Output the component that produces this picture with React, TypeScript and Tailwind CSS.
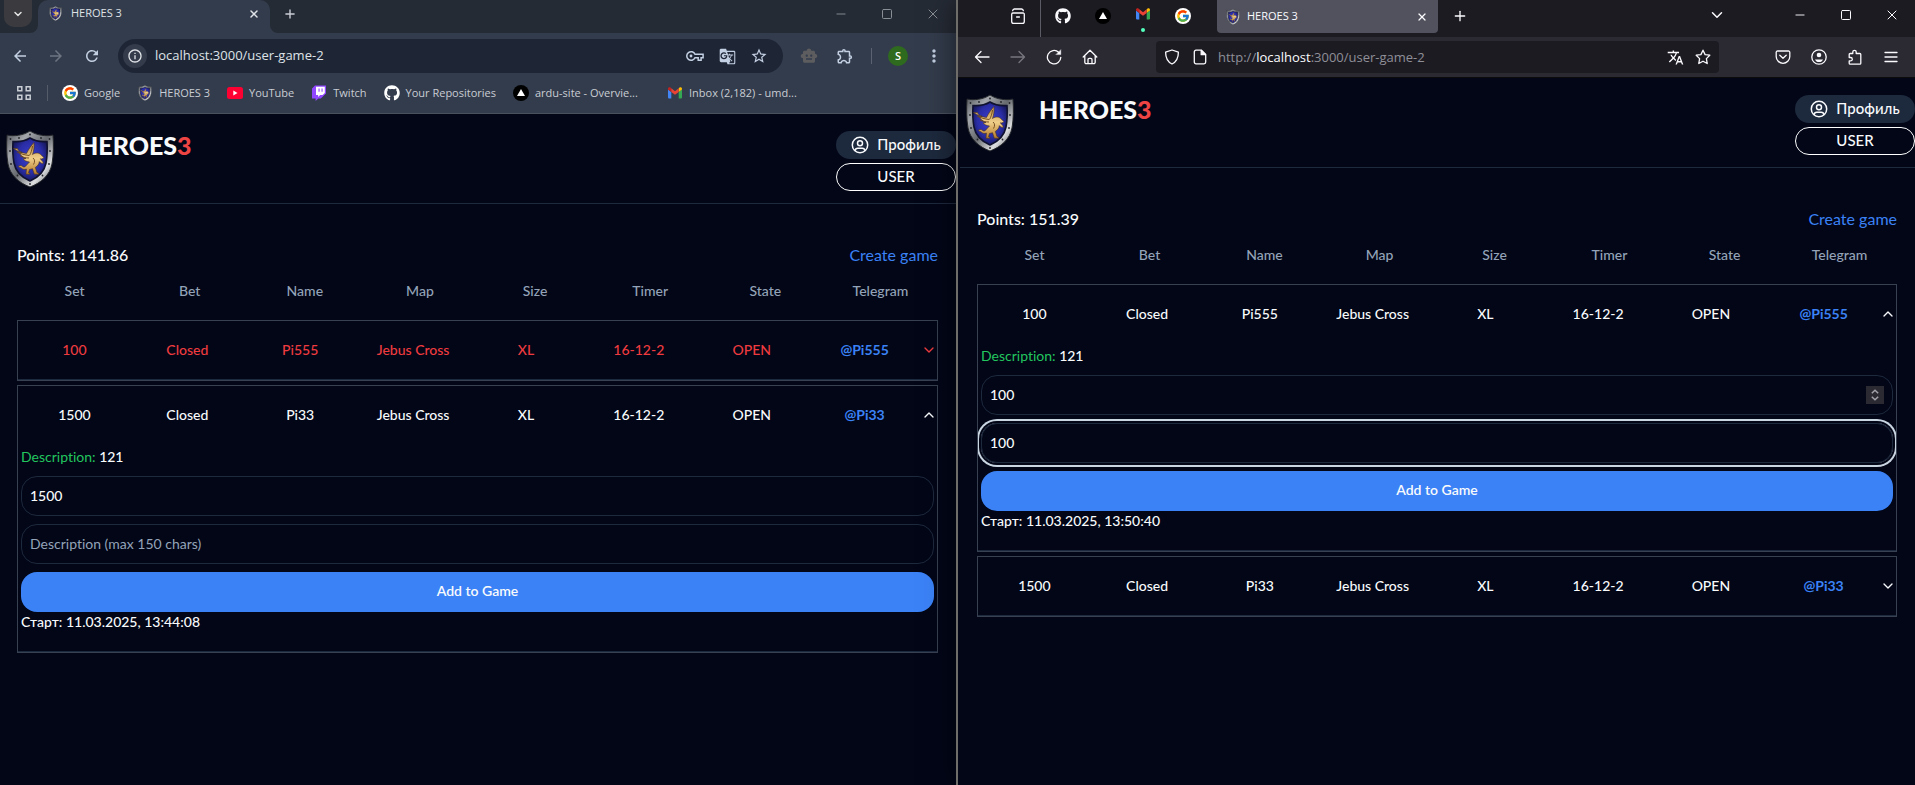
import React, { useId, useState } from "react";
import { FcGoogle } from "react-icons/fc";
import { FaGithub } from "react-icons/fa";
import {
  MdArrowBack,
  MdArrowForward,
  MdGTranslate,
  MdInfoOutline,
  MdMoreVert,
  MdOutlineExtension,
  MdRefresh,
  MdSmartToy,
  MdStarBorder,
  MdTranslate,
} from "react-icons/md";
import { ChevronDown, Minus, Plus, Square, X } from "lucide-react";

/* ---------- drawings ---------- */

function Crest({ className }: { className: string }) {
  const id = useId();
  return (
    <svg viewBox="0 0 48 58" className={className} aria-hidden="true">
      <defs>
        <linearGradient id={id + "m"} x1="0" y1="0" x2="1" y2="1">
          <stop offset="0" stopColor="#4c4f53" />
          <stop offset=".25" stopColor="#a3a6aa" />
          <stop offset=".5" stopColor="#66696d" />
          <stop offset=".75" stopColor="#dcdee0" />
          <stop offset="1" stopColor="#3f4145" />
        </linearGradient>
        <radialGradient id={id + "b"} cx=".5" cy=".45" r=".6">
          <stop offset="0" stopColor="#3a3fd0" />
          <stop offset=".6" stopColor="#2a2da6" />
          <stop offset="1" stopColor="#12144e" />
        </radialGradient>
        <linearGradient id={id + "g"} x1="0" y1="0" x2="0" y2="1">
          <stop offset="0" stopColor="#b98a45" />
          <stop offset=".5" stopColor="#f0cf8a" />
          <stop offset="1" stopColor="#b47a2c" />
        </linearGradient>
      </defs>
      <path
        d="M1 5C8 6.500 17 5.500 24 1c7 4.500 16 5.500 23 4 .6 9 .6 20-1 29-2 11-11 19-22 23C13 53 4 45 2 34 .4 25 .4 14 1 5Z"
        fill={"url(#" + id + "m)"}
        stroke="#25272b"
        strokeWidth="1"
      />
      <path
        d="M7 11.500c6 .5 12-.5 17-3.500 5 3 11 4 17 3.500.5 8 .2 15-1 21.500C38.500 41 32 47.500 24 51 16 47.500 9.500 41 8 33 6.800 26.500 6.500 19.500 7 11.500Z"
        fill={"url(#" + id + "b)"}
        stroke="#101230"
        strokeWidth="1.600"
      />
      <g fill="#232528">
        <circle cx="4.500" cy="9" r=".9" />
        <circle cx="13" cy="8" r=".9" />
        <circle cx="24" cy="4.500" r=".9" />
        <circle cx="35" cy="8" r=".9" />
        <circle cx="43.500" cy="9" r=".9" />
        <circle cx="4" cy="21" r=".9" />
        <circle cx="44" cy="21" r=".9" />
        <circle cx="5" cy="34" r=".9" />
        <circle cx="43" cy="34" r=".9" />
        <circle cx="11.500" cy="45.500" r=".9" />
        <circle cx="36.500" cy="45.500" r=".9" />
        <circle cx="24" cy="54" r=".9" />
      </g>
      <path
        d="M7.500 18.500c4 3 9 4.500 13 5 2-4 4.500-8 7.500-11 .5 5-.3 8.500-1.500 12 2-1.500 5.500-2.200 8-.2 1.500 1.200 2 2.500 3.300 3.200-.8 1.500-2.300 1.600-3.500 1.300.8 1.500 3 2.200 3 4.400-1.600.6-3-.3-4-1.600-.2 3-2 4.500-4 5.800l1.600 5c1 .2 1.800.8 2 1.800h-4.600l-1.800-5.500-3 .8-1 3.200c1 .2 1.500.8 1.700 1.500h-4.200l.4-5.200c-1.600.8-3.500.6-4.600-.6-1.200-1.400-3-.5-3.300-2.400 1.800-1 3.300-.6 4.500.8 1.400.8 2.600-.4 3.500-1.600l3-3.200c-2.800-.2-5-1.400-6.500-3.200 1.200.2 2 .1 3-.3-3.400-1.300-6-3.800-7.200-6.400 1.200.4 2.300.5 3.400.3-3.300-1-4.200-2.400-4.700-3.900Z"
        fill={"url(#" + id + "g)"}
        stroke="#4c3216"
        strokeWidth=".6"
      />
      <path
        d="M11 22c4 2 8 3 12 3.500M14 26c3 1.500 6 2 9 2M26.500 16c-.5 4-1.500 7-3 9.500M27 28c2 1.500 2 4 .5 6.500"
        stroke="#6b4519"
        strokeWidth=".9"
        fill="none"
      />
    </svg>
  );
}

const YouTubeMark = () => (
  <svg viewBox="0 0 16 12" className="h-3 w-4 shrink-0" aria-hidden="true">
    <rect width="16" height="12" rx="2.500" fill="#ff0033" />
    <path d="M6.300 3.600v4.800L10.500 6Z" fill="#fff" />
  </svg>
);

const TwitchMark = () => (
  <svg viewBox="0 0 16 16" className="size-4 shrink-0" aria-hidden="true">
    <path d="M4 .5 1 3.400v10h3.600v2.600l2.800-2.600h2.400L15 8.400V.5Z" fill="#9146ff" />
    <path d="M5 1.700h8.800v6.200l-2.200 2.200H9.200l-2.100 2v-2H5Z" fill="#fff" />
    <path d="M7.500 3.600h1.100v3.200H7.500Zm3 0h1.100v3.200h-1.100Z" fill="#9146ff" />
  </svg>
);

const GmailMark = () => (
  <svg viewBox="0 0 16 12" className="h-3 w-4 shrink-0" aria-hidden="true">
    <path d="M1 2.500 4.300 5v6.500H2a1 1 0 0 1-1-1Z" fill="#4285f4" />
    <path d="M15 2.500 11.700 5v6.500H14a1 1 0 0 0 1-1Z" fill="#34a853" />
    <path d="M11.700 1.600V5L15 2.600v-.8c0-1.500-1.500-2-2.500-1.200Z" fill="#fbbc04" />
    <path d="M4.300 1.600V5L1 2.600v-.8C1 .3 2.500-.2 3.500.6Z" fill="#c5221f" />
    <path d="M4.300 5V1.300L8 4.200l3.700-2.900V5L8 7.800Z" fill="#ea4335" />
  </svg>
);

const TriangleMark = () => (
  <svg viewBox="0 0 16 16" className="size-4 shrink-0" aria-hidden="true">
    <circle cx="8" cy="8" r="8" fill="#000" />
    <path d="M8 4 12 11H4Z" fill="#fff" />
  </svg>
);

const GoogleMark = () => (
  <span className="flex size-4 shrink-0 items-center justify-center rounded-full bg-white">
    <FcGoogle className="size-3.5" />
  </span>
);

const KeyGlyph = () => (
  <svg viewBox="0 0 18 12" className="h-3 w-[18px]" fill="none" stroke="currentColor" strokeWidth="1.500" aria-hidden="true">
    <path d="M9 4.300A4.300 4.300 0 1 0 9 7.700h3.200v2.500h2.900V7.700h2V4.300Z" />
    <circle cx="5" cy="6" r="1.400" fill="currentColor" stroke="none" />
  </svg>
);

const AppsGlyph = () => (
  <svg viewBox="0 0 14 14" className="size-3.5" fill="none" stroke="currentColor" strokeWidth="1.500" aria-hidden="true">
    <path d="M.8.8h4v4h-4ZM9.200.8h4v4h-4ZM.8 9.200h4v4h-4ZM9.200 9.200h4v4h-4Z" />
  </svg>
);

type GlyphProps = { children: React.ReactNode };
const Glyph = ({ children }: GlyphProps) => (
  <svg
    viewBox="0 0 16 16"
    className="size-4"
    fill="none"
    stroke="currentColor"
    strokeWidth="1.300"
    strokeLinecap="round"
    strokeLinejoin="round"
    aria-hidden="true"
  >
    {children}
  </svg>
);

/* ---------- shared pieces ---------- */

function IconButton({ label, className, children }: { label: string; className: string; children: React.ReactNode }) {
  return (
    <button type="button" aria-label={label} className={"flex shrink-0 items-center justify-center " + className}>
      {children}
    </button>
  );
}

function WindowButtons({ className }: { className: string }) {
  return (
    <div className={"flex " + className}>
      <IconButton label="Minimize" className="w-[46px]">
        <Minus className="size-3.5" strokeWidth={1.6} />
      </IconButton>
      <IconButton label="Maximize" className="w-[46px]">
        <Square className="size-3" strokeWidth={2} strokeLinejoin="miter" />
      </IconButton>
      <IconButton label="Close" className="w-[46px]">
        <X className="size-4" strokeWidth={1.5} />
      </IconButton>
    </div>
  );
}

/* ---------- first browser window ---------- */

const bookmarks = [
  { label: "Google", icon: <GoogleMark /> },
  { label: "HEROES 3", icon: <Crest className="size-4 shrink-0" /> },
  { label: "YouTube", icon: <YouTubeMark /> },
  { label: "Twitch", icon: <TwitchMark /> },
  { label: "Your Repositories", icon: <FaGithub className="size-4 shrink-0 text-white" /> },
  { label: "ardu-site - Overvie...", icon: <TriangleMark />, wide: true },
  { label: "Inbox (2,182) - umd...", icon: <GmailMark />, wide: true },
];

function ChromeBar() {
  return (
    <header className="border-b border-[#4a515e] bg-[#333c4c] font-['Open_Sans',sans-serif] text-[#c9cdd4]">
      <div className="flex h-[33px] bg-[#252b35]">
        <IconButton label="Search tabs" className="ml-1 h-[27px] w-7 rounded-b-[10px] bg-[#3b3b3f] text-[#e3e3e3]">
          <ChevronDown className="size-3" strokeWidth={3} />
        </IconButton>
        <svg viewBox="0 0 8 8" className="ml-[-2px] size-2 shrink-0 self-end" aria-hidden="true">
          <path d="M8 0v8H0a8 8 0 0 0 8-8Z" fill="#333c4c" />
        </svg>
        <div className="flex w-[232px] items-center rounded-t-[10px] bg-[#333c4c] px-2.5 pb-1.5 text-[#dfe2e7]">
          <Crest className="size-[15px] shrink-0" />
          <span className="ml-2 flex-1 text-[11px]">HEROES 3</span>
          <IconButton label="Close tab" className="size-3">
            <X className="size-3" strokeWidth={3} />
          </IconButton>
        </div>
        <svg viewBox="0 0 8 8" className="size-2 shrink-0 self-end" aria-hidden="true">
          <path d="M0 0v8h8a8 8 0 0 1-8-8Z" fill="#333c4c" />
        </svg>
        <IconButton label="New tab" className="w-6 pb-1.5">
          <Plus className="size-3.5" strokeWidth={2.4} />
        </IconButton>
        <WindowButtons className="ml-auto pb-1.5 text-[#8a8e95]" />
      </div>

      <div className="flex h-[46px] items-center text-[#c3cfe2]">
        <IconButton label="Back" className="ml-0.5 size-9">
          <MdArrowBack className="size-[18px]" />
        </IconButton>
        <IconButton label="Forward" className="size-9 text-[#6c7481]">
          <MdArrowForward className="size-[18px]" />
        </IconButton>
        <IconButton label="Reload" className="size-9">
          <MdRefresh className="size-[18px]" />
        </IconButton>
        <div className="ml-2 flex h-[34px] flex-1 items-center rounded-full bg-[#1e2636] pr-2">
          <IconButton label="Site information" className="ml-[5px] size-6 rounded-full bg-[#343b4b] text-[#dfe2e7]">
            <MdInfoOutline className="size-4" />
          </IconButton>
          <input
            aria-label="Address"
            defaultValue="localhost:3000/user-game-2"
            className="ml-2 min-w-0 flex-1 bg-transparent text-[13px] text-[#dfe2e7] outline-none"
          />
          <IconButton label="Passwords" className="w-8">
            <KeyGlyph />
          </IconButton>
          <IconButton label="Translate" className="w-8">
            <MdGTranslate className="size-[17px]" />
          </IconButton>
          <IconButton label="Bookmark" className="w-8">
            <MdStarBorder className="size-[18px]" />
          </IconButton>
        </div>
        <IconButton label="Assistant" className="ml-2 w-9 text-[#5d5d5f]">
          <MdSmartToy className="size-[18px]" />
        </IconButton>
        <IconButton label="Extensions" className="w-9">
          <MdOutlineExtension className="size-[18px]" />
        </IconButton>
        <span className="ml-2 h-4 w-px bg-[#5b6372]" />
        <IconButton label="Account S" className="ml-4 size-5 rounded-full bg-[#2f6b1e] text-[11px] font-semibold text-white">
          S
        </IconButton>
        <IconButton label="Menu" className="ml-2 mr-1 w-9">
          <MdMoreVert className="size-5" />
        </IconButton>
      </div>

      <nav aria-label="Bookmarks" className="flex h-[34px] items-center pb-1.5">
        <IconButton label="Apps" className="ml-[17px] w-3.5">
          <AppsGlyph />
        </IconButton>
        <span className="ml-4 h-4 w-px bg-[#545b69]" />
        <ul className="ml-3.5 flex items-center gap-[17px]">
          {bookmarks.map((b) => (
            <li key={b.label} className={b.wide ? "w-[137px]" : ""}>
              <a href="#" className="flex items-center gap-1.5 text-[11px] whitespace-nowrap">
                {b.icon}
                {b.label}
              </a>
            </li>
          ))}
        </ul>
      </nav>
    </header>
  );
}

/* ---------- second browser window ---------- */

function FirefoxBar() {
  return (
    <header className="border-b border-[#0c0c0d] bg-[#2b2a33] font-['Open_Sans',sans-serif] text-[#fbfbfe]">
      <div className="flex h-[37px] bg-[#1c1b22]">
        <IconButton label="Recent browsing" className="ml-[42px] w-9 pb-1.5">
          <Glyph>
            <path d="M1.700 6.200a1.200 1.200 0 0 1 1.200-1.200h10.200a1.200 1.200 0 0 1 1.200 1.200v7.200a1.900 1.900 0 0 1-1.900 1.900H3.600a1.900 1.900 0 0 1-1.900-1.900ZM2.700 2.600A1.900 1.900 0 0 1 4.400 1h7.200a1.900 1.900 0 0 1 1.700 1.600M6.600 9h2.800" />
          </Glyph>
        </IconButton>
        <span className="mr-0.5 ml-1 w-px bg-[#5b5b66]" />
        <IconButton label="GitHub" className="w-10 pb-1.5">
          <FaGithub className="size-4" />
        </IconButton>
        <IconButton label="ardu-site" className="w-10 pb-1.5">
          <TriangleMark />
        </IconButton>
        <IconButton label="Gmail" className="w-10 flex-col gap-2 pt-0.5">
          <GmailMark />
          <span className="size-1 rounded-full bg-[#54ffbd]" />
        </IconButton>
        <IconButton label="Google" className="w-10 pb-1.5">
          <GoogleMark />
        </IconButton>
        <div className="mb-1 ml-3.5 flex w-[221px] items-center rounded-b bg-[#52525e] px-2">
          <Crest className="size-4 shrink-0" />
          <span className="ml-1.5 flex-1 text-[11px]">HEROES 3</span>
          <IconButton label="Close tab" className="size-4">
            <X className="size-3" strokeWidth={2.4} />
          </IconButton>
        </div>
        <IconButton label="New tab" className="ml-1 w-9 pb-1.5">
          <Plus className="size-4" strokeWidth={2} />
        </IconButton>
        <IconButton label="List all tabs" className="ml-auto w-9 pb-2">
          <ChevronDown className="size-[18px]" strokeWidth={2} />
        </IconButton>
        <WindowButtons className="ml-[42px] pb-2" />
      </div>

      <div className="flex h-10 items-center px-1.5">
        <IconButton label="Back" className="size-9">
          <Glyph>
            <path d="M15 8H1.500M7 2.500 1.500 8 7 13.500" />
          </Glyph>
        </IconButton>
        <IconButton label="Forward" className="size-9 text-[#77767e]">
          <Glyph>
            <path d="M1 8h13.500M9 2.500 14.500 8 9 13.500" />
          </Glyph>
        </IconButton>
        <IconButton label="Reload" className="size-9">
          <Glyph>
            <path d="M14.800 8.300A6.700 6.700 0 1 1 12.600 3.200" />
            <path d="M14.800 1v4.600h-4.600Z" fill="currentColor" strokeWidth=".4" />
          </Glyph>
        </IconButton>
        <IconButton label="Home" className="size-9">
          <Glyph>
            <path d="M1.200 8 8 1.300 14.800 8M2.800 6.600v6.600A1.500 1.500 0 0 0 4.300 14.700h7.400a1.500 1.500 0 0 0 1.500-1.500V6.600M6 14.500v-4a1.200 1.200 0 0 1 1.200-1.200h1.600A1.200 1.200 0 0 1 10 10.500v4" />
          </Glyph>
        </IconButton>
        <div className="mr-[46px] ml-12 flex h-8 flex-1 items-center rounded bg-[#1c1b22] px-2">
          <IconButton label="Tracking protection" className="w-4">
            <Glyph>
              <path d="M8 1 1.600 3.200C1.600 8.500 3 12.500 8 15c5-2.500 6.400-6.500 6.400-11.800Z" />
            </Glyph>
          </IconButton>
          <IconButton label="Page information" className="ml-3 w-4">
            <Glyph>
              <path d="M9.500 1.200H4a1.700 1.700 0 0 0-1.700 1.700v10.200A1.700 1.700 0 0 0 4 14.800h8a1.700 1.700 0 0 0 1.700-1.700V5.400Z" />
              <path d="M9.200 1.400v4.300h4.300Z" fill="currentColor" />
            </Glyph>
          </IconButton>
          <a href="#" className="ml-2.5 flex-1 pt-0.5 text-[13px] text-[#8f8f98]">
            http://<span className="text-[#fbfbfe]">localhost</span>:3000/user-game-2
          </a>
          <IconButton label="Translate page" className="w-7">
            <MdTranslate className="size-[17px]" />
          </IconButton>
          <IconButton label="Bookmark" className="-mr-1.5 w-7">
            <Glyph>
              <path d="m8 1.200 2.100 4.400 4.700.6-3.400 3.400.8 4.900L8 12.200l-4.200 2.300.8-4.900L1.200 6.200l4.700-.6Z" />
            </Glyph>
          </IconButton>
        </div>
        <IconButton label="Save to Pocket" className="size-9">
          <Glyph>
            <path d="M2.500 2h11A1.300 1.300 0 0 1 14.800 3.300V7.500a6.800 6.800 0 0 1-13.600 0V3.300A1.300 1.300 0 0 1 2.500 2ZM4.800 6.200 8 9.300l3.200-3.100" />
          </Glyph>
        </IconButton>
        <IconButton label="Account" className="size-9">
          <Glyph>
            <circle cx="8" cy="8" r="7.200" />
            <circle cx="8" cy="6" r="2.300" fill="currentColor" stroke="none" />
            <path d="M4 10.500h8c-.6 1.600-2 2.600-4 2.600s-3.400-1-4-2.600Z" fill="currentColor" stroke="none" />
          </Glyph>
        </IconButton>
        <IconButton label="Extensions" className="size-9">
          <Glyph>
            <path d="M2.200 6.200V5.500A1 1 0 0 1 3.200 4.500h2.600V3a1.700 1.700 0 0 1 3.400 0v1.500h3.600a1 1 0 0 1 1 1v8.700a1 1 0 0 1-1 1H3.200a1 1 0 0 1-1-1v-2.300h1.400a1.600 1.600 0 0 0 0-3.400H2.200Z" />
          </Glyph>
        </IconButton>
        <IconButton label="Menu" className="size-9">
          <Glyph>
            <path d="M2 3.500h12M2 8h12M2 12.500h12" />
          </Glyph>
        </IconButton>
      </div>
    </header>
  );
}

/* ---------- site ---------- */

type Game = {
  set: number;
  name: string;
  start: string;
  mine?: boolean;
  open?: boolean;
  bet: string;
  note?: string;
  stepper?: boolean;
};

const columns = ["Set", "Bet", "Name", "Map", "Size", "Timer", "State", "Telegram"];

function GameCard({ game }: { game: Game }) {
  const [open, setOpen] = useState(Boolean(game.open));
  const [bet, setBet] = useState(game.bet);
  const cells = [game.set, "Closed", game.name, "Jebus Cross", "XL", "16-12-2", "OPEN"];
  return (
    <tbody className="mb-1 block border border-[#374151]">
      <tr
        className={
          "grid grid-cols-[repeat(8,minmax(0,1fr))_16px] items-center py-[19px] text-center font-medium " +
          (game.mine ? "text-[#ef3b3f]" : "text-slate-50") +
          (open ? "" : " border-b border-slate-800")
        }
      >
        {cells.map((c, i) => (
          <td key={i}>{c}</td>
        ))}
        <td>
          <a href="#" className="font-bold text-[#3b82f6]">
            @{game.name}
          </a>
        </td>
        <td className="flex">
          <button type="button" aria-label="Details" aria-expanded={open} onClick={() => setOpen(!open)} className="flex h-5 items-center">
            <ChevronDown className={"size-4 " + (open ? "rotate-180" : "")} strokeWidth={2} />
          </button>
        </td>
      </tr>
      {open && (
        <tr className="block border-b border-slate-800">
          <td colSpan={9} className="block overflow-hidden px-[3px] pt-[3px] pb-5">
            <form className="flex flex-col gap-2" onSubmit={(e) => e.preventDefault()}>
              <p className="h-[21px]">
                <span className="text-[#22c55e]">Description:</span> <span className="font-medium">121</span>
              </p>
              <div className="relative">
                <input
                  aria-label="Bet"
                  type="number"
                  value={bet}
                  onChange={(e) => setBet(e.target.value)}
                  className="block h-10 w-full [appearance:textfield] rounded-2xl border border-slate-800 bg-transparent px-2 pb-0.5 font-medium outline-none"
                />
                {game.stepper && (
                  <span className="absolute top-[11px] right-[9px] flex size-[18px] flex-col items-center justify-center gap-0.5 bg-[#2b2a33] text-[#a3a2ab]">
                    <button type="button" aria-label="Increase" onClick={() => setBet(String(Number(bet) + 1))}>
                      <svg viewBox="0 0 8 5" className="h-[5px] w-2" fill="none" stroke="currentColor" strokeWidth="1.500">
                        <path d="M.8 4.200 4 1.200l3.200 3" />
                      </svg>
                    </button>
                    <button type="button" aria-label="Decrease" onClick={() => setBet(String(Number(bet) - 1))}>
                      <svg viewBox="0 0 8 5" className="h-[5px] w-2" fill="none" stroke="currentColor" strokeWidth="1.500">
                        <path d="M.8.8 4 3.800l3.200-3" />
                      </svg>
                    </button>
                  </span>
                )}
              </div>
              <input
                aria-label="Description"
                defaultValue={game.note}
                placeholder="Description (max 150 chars)"
                className={
                  "h-10 w-full rounded-2xl border border-slate-800 bg-transparent px-2 pb-0.5 font-medium outline-none placeholder:font-normal placeholder:text-[#94a3b8] " +
                  (game.note ? "ring-2 ring-slate-300 ring-offset-2 ring-offset-[#020617]" : "")
                }
              />
              <button type="submit" className="h-10 w-full rounded-2xl bg-[#3b82f6] pb-0.5 font-semibold text-slate-50">
                Add to Game
              </button>
            </form>
            <p className="h-[19px] leading-[19px] font-medium">Старт: {game.start}</p>
          </td>
        </tr>
      )}
    </tbody>
  );
}

function Site({ points, games, className }: { points: string; games: Game[]; className: string }) {
  return (
    <div
      className={
        "flex-1 bg-[#020617] font-['Lato','Open_Sans',sans-serif] text-sm text-slate-50 [font-variant-ligatures:none] " + className
      }
    >
      <div className="flex h-[90px] items-start border-b border-slate-800">
        <Crest className="mt-4 ml-1.5 h-[58px] w-12" />
        <h1 className="mt-[15px] ml-[25px] text-[25px] leading-8 font-black">
          HEROES<span className="text-[#ef4444]">3</span>
        </h1>
        <div className="mt-[17px] ml-auto flex w-[120px] flex-col gap-1 text-[15px] font-medium">
          <button type="button" className="flex h-7 items-center justify-center gap-2 rounded-full bg-slate-800">
            <svg viewBox="0 0 18 18" className="size-[18px]" fill="none" stroke="currentColor" strokeWidth="1.500" aria-hidden="true">
              <circle cx="9" cy="9" r="7.700" />
              <circle cx="9" cy="7.200" r="2.500" />
              <path d="M4 14.800c.3-1.800 1.300-2.600 2.700-2.600h4.600c1.400 0 2.400.8 2.700 2.600" />
            </svg>
            Профиль
          </button>
          <button type="button" className="h-7 rounded-full border border-white">
            USER
          </button>
        </div>
      </div>
      <main className="pt-[39px] pr-[18px] pl-[17px]">
        <div className="flex justify-between text-base">
          <p className="font-medium">Points: {points}</p>
          <a href="#" className="text-[#3b82f6]">
            Create game
          </a>
        </div>
        <table className="block">
          <thead className="mb-[5px] block">
            <tr className="grid h-12 grid-cols-8 items-center text-[#94a3b8]">
              {columns.map((c) => (
                <th key={c} scope="col" className="font-medium">
                  {c}
                </th>
              ))}
            </tr>
          </thead>
          {games.map((g) => (
            <GameCard key={g.name} game={g} />
          ))}
        </table>
      </main>
    </div>
  );
}

const leftGames: Game[] = [
  { set: 100, name: "Pi555", start: "11.03.2025, 13:50:40", bet: "100", mine: true },
  { set: 1500, name: "Pi33", start: "11.03.2025, 13:44:08", bet: "1500", open: true },
];

const rightGames: Game[] = [
  { set: 100, name: "Pi555", start: "11.03.2025, 13:50:40", bet: "100", note: "100", open: true, stepper: true },
  { set: 1500, name: "Pi33", start: "11.03.2025, 13:44:08", bet: "1500" },
];

export default function App() {
  return (
    <div className="grid min-h-screen grid-cols-[minmax(0,956fr)_minmax(0,959fr)] overflow-hidden">
      <section aria-label="First player" className="flex flex-col">
        <ChromeBar />
        <Site points="1141.86" games={leftGames} className="" />
      </section>
      <section
        aria-label="Second player"
        className="relative flex flex-col border-l-2 border-[#6f6d69] shadow-[0_0_28px_rgba(0,0,0,0.5)]"
      >
        <FirefoxBar />
        <Site points="151.39" games={rightGames} className="pl-0.5" />
      </section>
    </div>
  );
}
